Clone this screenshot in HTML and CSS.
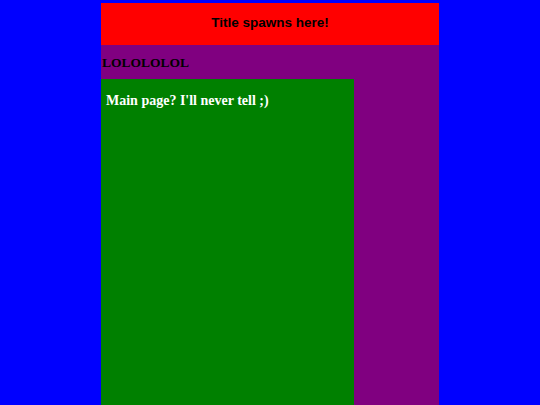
FILE: index.html
```html
<!DOCTYPE html>
<html>
<head>
<meta charset="utf-8">
<link rel="stylesheet" href="styles.css">
</head>
<body>
<div class="page">
  <header class="title-bar"><h1 class="title">Title spawns here!</h1></header>
  <div class="sub"><h2 class="lol">LOLOLOLOL</h2></div>
  <main class="main"><p class="main-text">Main page? I'll never tell ;)</p></main>
</div>
</body>
</html>
```
FILE: styles.css
```css
html, body {
  margin: 0;
  padding: 0;
  height: 100%;
  background: #0000ff;
  overflow: hidden;
}
.page {
  width: 338px;
  margin: 3px auto 0;
  background: #800080;
  height: 402px;
  display: flex;
  flex-direction: column;
}
.title-bar {
  height: 42px;
  box-sizing: border-box;
  padding-bottom: 3px;
  background: #ff0000;
  display: flex;
  align-items: center;
  justify-content: center;
}
.title {
  margin: 0;
  font-family: "Liberation Sans", Arial, sans-serif;
  font-weight: bold;
  font-size: 13.5px;
  color: #000;
}
.sub {
  height: 34px;
  box-sizing: border-box;
  padding-top: 2px;
  display: flex;
  align-items: center;
}
.lol {
  margin: 0 0 0 1px;
  font-family: "Liberation Serif", "Times New Roman", serif;
  font-weight: bold;
  font-size: 13.5px;
  color: #000;
}
.main {
  width: 253px;
  flex: 1;
  background: #008000;
  padding: 14px 5px 0;
  box-sizing: border-box;
}
.main-text {
  margin: 0;
  font-family: "Liberation Serif", "Times New Roman", serif;
  font-weight: bold;
  font-size: 14px;
  color: #fff;
}
```
